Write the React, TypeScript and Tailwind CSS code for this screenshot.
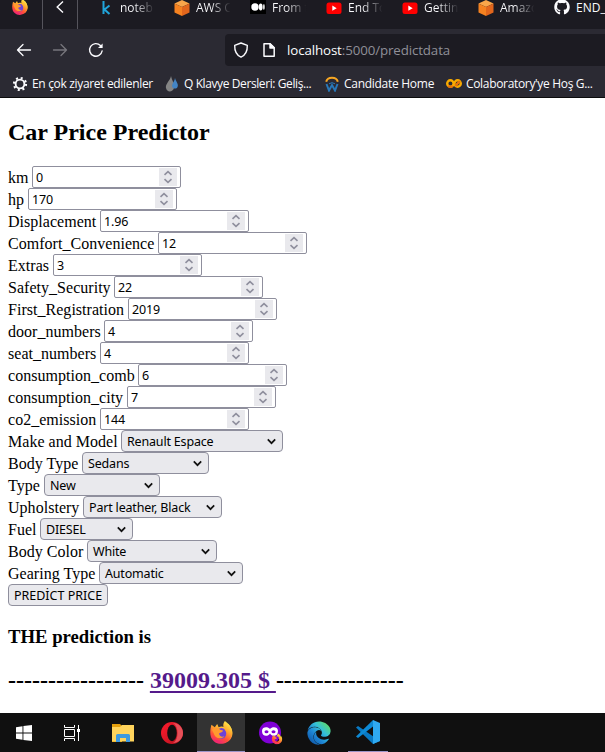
import type { ReactNode } from "react";
import { FaGithub, FaFirefoxBrowser, FaEdge } from "react-icons/fa";

function Gradients() {
  return (
    <svg className="absolute h-0 w-0">
      <defs>
        <linearGradient id="fox" x1="0.85" y1="0" x2="0.25" y2="1">
          <stop offset="0.05" stopColor="#fff04a" />
          <stop offset="0.4" stopColor="#ffa62e" />
          <stop offset="0.7" stopColor="#ff5038" />
          <stop offset="1" stopColor="#f0207a" />
        </linearGradient>
        <linearGradient id="edge" x1="0.9" y1="0.1" x2="0.1" y2="0.9">
          <stop offset="0" stopColor="#5ddc68" />
          <stop offset="0.35" stopColor="#35c1d8" />
          <stop offset="0.65" stopColor="#1e86d6" />
          <stop offset="1" stopColor="#0f58a8" />
        </linearGradient>
        <linearGradient id="opera" x1="0" y1="0" x2="1" y2="1">
          <stop offset="0" stopColor="#ff1b2d" />
          <stop offset="1" stopColor="#b5121f" />
        </linearGradient>
      </defs>
    </svg>
  );
}

function Fox({ size }: { size: number }) {
  return (
    <svg width={size} height={size} viewBox="0 0 24 24" className="shrink-0">
      <path d="M1.5 4 5 6.5 7.5 3 9 6.5C12 5 15 6 17 8L19 3C23 7 25 13 22 18C19 24 9 26 4 21C-1 17 0 9 1.5 4Z" fill="url(#fox)" />
      <circle cx="12" cy="13" r="5.6" fill="#6d43d8" />
      <path d="M15.5 0C22 4 25 11 22 17C19 23.5 9 25 4 19C9 21.5 17 19 17 13C17 9 11 6.500 15.500 0Z" fill="url(#fox)" />
      <path d="M2 9C4 6.500 8 6.500 10.500 9L13.500 10C13.500 12 11 12 9.500 13C9.500 15.500 12 17 15 16C12 20 5 18 4 13Z" fill="#ff9a2f" />
    </svg>
  );
}

function Cube() {
  return (
    <svg width="16" height="18" viewBox="0 0 16 18" className="shrink-0">
      <path d="M8 1 15.5 4.5 8 8 .5 4.5Z" fill="#f9a64a" />
      <path d="M.5 4.5 8 8V17L.5 13.5Z" fill="#f58220" />
      <path d="M15.5 4.5 8 8V17l7.5-3.5Z" fill="#e2661c" />
    </svg>
  );
}

function YouTube() {
  return (
    <svg width="16" height="16" viewBox="0 0 16 16" className="shrink-0">
      <rect x=".5" y="2.5" width="15" height="11.5" rx="2.5" fill="#f00" />
      <path d="M6.3 5.6 10.7 8.2 6.3 10.8Z" fill="#fff" />
    </svg>
  );
}

function Tab({ icon, label }: { icon: ReactNode; label: string }) {
  return (
    <div className="flex h-4 w-[76px] shrink-0 items-center">
      <div className="flex w-[22px] shrink-0 items-center">{icon}</div>
      <div className="w-12 whitespace-nowrap bg-linear-to-r from-[#fbfbfe] from-30% to-transparent to-72% bg-clip-text text-[12px] leading-4 text-transparent">
        {label}
      </div>
    </div>
  );
}

function Browser() {
  return (
    <header className="h-[98px] overflow-hidden border-b border-[#0c0c0d] bg-[#2b2a33] font-['Open_Sans','Noto_Sans',sans-serif] text-[#fbfbfe]">
      <div className="flex h-[29px] bg-[#1c1b22]">
        <div className="flex w-[43px] shrink-0 border-r border-[#55545c] pl-3">
          <div className="-mt-px"><Fox size={16} /></div>
        </div>
        <div className="flex w-[35px] shrink-0 justify-center border-r border-[#55545c]">
          <svg width="10" height="14" viewBox="0 0 10 14" fill="none" stroke="#fbfbfe" strokeWidth="1.4">
            <path d="M8 1.5 2.2 7 8 12.5" />
          </svg>
        </div>
        <div className="flex pl-5">
          <Tab
            icon={
              <svg width="16" height="16" viewBox="0 0 16 16" fill="none" stroke="#20a4da" strokeWidth="2">
                <path d="M5.500 1V14M11.500 5.500 6.500 9.500 11.500 14" />
              </svg>
            }
            label="noteb"
          />
          <Tab icon={<Cube />} label="AWS C" />
          <Tab
            icon={
              <svg width="16" height="16" viewBox="0 0 16 16">
                <path fill="#000" d="M0 0h16v14H0z" />
                <circle cx="5" cy="7" r="3.7" fill="#fff" />
                <ellipse cx="10.7" cy="7" rx="1.9" ry="3.4" fill="#fff" />
                <ellipse cx="13.9" cy="7" rx=".8" ry="3" fill="#fff" />
              </svg>
            }
            label="From f"
          />
          <Tab icon={<YouTube />} label="End To" />
          <Tab icon={<YouTube />} label="Gettin" />
          <Tab icon={<Cube />} label="Amazo" />
          <div className="flex h-4 items-center">
            <FaGithub size={16} className="-mt-0.5 shrink-0" />
            <span className="pl-1.5 text-[12px] leading-4">END_</span>
          </div>
        </div>
      </div>
      <div className="flex h-[41px] items-center pl-4">
        <div className="flex w-[209px] shrink-0 gap-5">
          <svg width="16" height="16" viewBox="0 0 16 16" fill="none" stroke="#fbfbfe" strokeWidth="1.3" strokeLinecap="round" strokeLinejoin="round">
            <path d="M14.5 8H1.5M7 2.5 1.5 8 7 13.5" />
          </svg>
          <svg width="16" height="16" viewBox="0 0 16 16" fill="none" stroke="#77767d" strokeWidth="1.3" strokeLinecap="round" strokeLinejoin="round">
            <path d="M1.5 8H14.5M9 2.5 14.5 8 9 13.5" />
          </svg>
          <svg width="16" height="16" viewBox="0 0 16 16" fill="none" stroke="#fbfbfe" strokeWidth="1.4" strokeLinecap="round">
            <path d="M14.1 9A6.3 6.3 0 1 1 12.4 3.5" />
            <path d="M14.6 1.5V6H10Z" fill="#fbfbfe" stroke="none" />
          </svg>
        </div>
        <div className="flex h-8 flex-1 items-center rounded-l-sm bg-[#1c1b22] pl-2">
          <svg width="16" height="16" viewBox="0 0 16 16" fill="none" stroke="#fbfbfe" strokeWidth="1.4" strokeLinejoin="round">
            <path d="M8 1 14.3 3.3C14.5 9 12.5 13.2 8 15.2C3.5 13.2 1.5 9 1.7 3.3Z" />
          </svg>
          <svg width="16" height="16" viewBox="0 0 16 16" fill="none" stroke="#fbfbfe" strokeWidth="1.5" strokeLinejoin="round" className="ml-3">
            <path d="M3 1.7H9L13.2 5.9V14.3H3Z" />
            <path d="M9 1.7V5.9H13.2Z" fill="#fbfbfe" />
          </svg>
          <div className="ml-[10px] pt-0.5 text-[13.33px] tracking-[-0.12px] text-[#8f8f98]">
            <span className="text-[#fbfbfe]">localhost</span>:5000/predictdata
          </div>
        </div>
      </div>
      <nav className="flex h-[27px] items-center whitespace-nowrap pl-3 text-[12px] tracking-[-0.33px]">
        <svg width="16" height="16" viewBox="0 0 16 16" fill="none" stroke="#fbfbfe" className="shrink-0">
          <circle cx="8" cy="8" r="4.4" strokeWidth="1.9" />
          <circle cx="8" cy="8" r="6" strokeWidth="2.2" strokeDasharray="2 2.712" />
        </svg>
        <span className="ml-1 w-[130px] shrink-0">En çok ziyaret edilenler</span>
        <svg width="16" height="16" viewBox="0 0 16 16" className="ml-0.5 shrink-0">
          <path d="M7 0C8 5 11 8 10 12C9 16 3 17 2 12C1 8 6 5 7 0Z" fill="#858585" />
          <path d="M11 2C12 6 15 8 13.5 11C12.5 13.5 8.5 13 8 10C8 7 11 5 11 2Z" fill="#4384c4" />
        </svg>
        <span className="ml-1 w-[129px] shrink-0 tracking-[-0.4px]">Q Klavye Dersleri: Geliş...</span>
        <svg width="16" height="16" viewBox="0 0 16 16" fill="none" className="ml-[11px] shrink-0">
          <path d="M2.200 5.800A5.900 5 0 0 1 13.800 5.800" stroke="#f6a623" strokeWidth="2" />
          <path d="M2.500 8 5 14.500 8 9 11 14.500 13.500 8" stroke="#2878b8" strokeWidth="2" />
          <path d="M5 7.800Q8 5.500 11 7.800" stroke="#2878b8" strokeWidth="1" />
        </svg>
        <span className="ml-1 w-[91px] shrink-0 tracking-[-0.28px]">Candidate Home</span>
        <svg width="16" height="16" viewBox="0 0 16 16" fill="none" strokeWidth="2.4" className="ml-[11px] shrink-0">
          <circle cx="4.400" cy="7.500" r="3.200" stroke="#f9ab00" />
          <circle cx="11.600" cy="7.500" r="3.200" stroke="#f9ab00" />
          <path d="M2.200 9.800A3.200 3.200 0 0 0 6.700 9.800M9.300 9.800 13.900 5.200" stroke="#e8710a" />
        </svg>
        <span className="ml-1">Colaboratory'ye Hoş G...</span>
      </nav>
    </header>
  );
}

const numbers = [
  { label: "km", width: "w-6", value: "0" },
  { label: "hp", width: "w-5", value: "170" },
  { label: "Displacement", width: "w-[92px]", value: "1.96" },
  { label: "Comfort_Convenience", width: "w-[150px]", value: "12" },
  { label: "Extras", width: "w-[45px]", value: "3" },
  { label: "Safety_Security", width: "w-[106px]", value: "22" },
  { label: "First_Registration", width: "w-[120px]", value: "2019" },
  { label: "door_numbers", width: "w-24", value: "4" },
  { label: "seat_numbers", width: "w-[92px]", value: "4" },
  { label: "consumption_comb", width: "w-[130px]", value: "6" },
  { label: "consumption_city", width: "w-[119px]", value: "7" },
  { label: "co2_emission", width: "w-[92px]", value: "144" },
];

const selects = [
  { label: "Make and Model", width: "w-[113px]", box: "w-[162px]", value: "Renault Espace" },
  { label: "Body Type", width: "w-[74px]", box: "w-[127px]", value: "Sedans" },
  { label: "Type", width: "w-9", box: "w-[116px]", value: "New" },
  { label: "Upholstery", width: "w-[75px]", box: "w-[139px]", value: "Part leather, Black" },
  { label: "Fuel", width: "w-8", box: "w-[93px]", value: "DIESEL" },
  { label: "Body Color", width: "w-[79px]", box: "w-[130px]", value: "White" },
  { label: "Gearing Type", width: "w-[91px]", box: "w-36", value: "Automatic" },
];

function Form() {
  return (
    <form className="mt-5">
      {numbers.map((n) => (
        <div key={n.label} className="flex h-[22px] whitespace-nowrap">
          <label className={`${n.width} shrink-0 leading-[23px] tracking-[0.03px]`}>{n.label}</label>
          <div className="flex h-[22px] w-[149px] items-center justify-between rounded-[2px] border border-[#8f8f9d] bg-white pl-[3px] pr-[3px] font-['Noto_Sans',sans-serif] text-[12.5px]">
            <span className="pt-0.5 tracking-[-0.15px]">{n.value}</span>
            <div className="flex h-[18px] w-[18px] items-center justify-center bg-[#e9e9ed]">
              <svg width="10" height="14" viewBox="0 0 10 14" fill="none" stroke="#8f8f9d" strokeWidth="1.6">
                <path d="M1.5 4.8 5 1.6 8.5 4.8M1.5 9.2 5 12.4 8.5 9.2" />
              </svg>
            </div>
          </div>
        </div>
      ))}
      {selects.map((s) => (
        <div key={s.label} className="flex h-[22px] whitespace-nowrap">
          <label className={`${s.width} shrink-0 leading-[23px] tracking-[0.03px]`}>{s.label}</label>
          <div className={`${s.box} flex h-[22px] items-center justify-between rounded-[4px] border border-[#8f8f9d] bg-[#e9e9ed] pl-[5px] pr-1.5 font-['Noto_Sans',sans-serif] text-[12.5px]`}>
            <span className="pt-0.5 tracking-[-0.18px]">{s.value}</span>
            <svg width="9" height="7" viewBox="0 0 9 7" fill="none" stroke="#111" strokeWidth="1.7">
              <path d="M.8 1.4 4.5 5.2 8.2 1.4" />
            </svg>
          </div>
        </div>
      ))}
      <button
        type="button"
        className="flex h-[22px] w-[100px] items-center justify-center whitespace-nowrap rounded-[4px] border border-[#8f8f9d] bg-[#e9e9ed] pt-0.5 font-['Noto_Sans',sans-serif] text-[12.5px]"
      >
        PREDİCT PRICE
      </button>
    </form>
  );
}

function Taskbar() {
  return (
    <footer className="flex h-[39px] items-stretch bg-[#101010]">
      <div className="flex w-12 items-center justify-center">
        <svg width="16" height="16" viewBox="0 0 16 16" fill="#fff">
          <path d="M0 2.2 6.5 1.3V7.5H0ZM7.4 1.1 16 0V7.5H7.4ZM0 8.4H6.5V14.7L0 13.8ZM7.4 8.4H16V16L7.4 14.9Z" />
        </svg>
      </div>
      <div className="flex w-12 items-center justify-center">
        <svg width="16" height="16" viewBox="0 0 16 16" fill="none" stroke="#fff">
          <path d="M.5 0V2.5H10.5V0M.5 16V13.5H10.5V16M.5 4.5H10.5V11.5H.5ZM14.5 0V16" />
          <path d="M13 4h3v3h-3z" fill="#fff" stroke="none" />
        </svg>
      </div>
      <div className="flex w-[53px] items-center justify-center">
        <svg width="22" height="18" viewBox="0 0 22 18">
          <path d="M0 0H8L10 2V18H0Z" fill="#e5a00d" />
          <path d="M0 3H8L10 1H22V17.5H0Z" fill="#ffd45c" />
          <path d="M4 18V11.5Q4 10 5.5 10H16.5Q18 10 18 11.5V18H14V14H8V18Z" fill="#3d9ae0" />
        </svg>
      </div>
      <div className="flex w-12 items-center justify-center pr-0.5">
        <svg width="22" height="22" viewBox="0 0 22 22" className="shrink-0">
          <circle cx="11" cy="11" r="11" fill="url(#opera)" />
          <path d="M12 1C17 1 22 5 22 11S17 21 12 21C18 18 18 4 12 1Z" fill="#e65058" />
          <ellipse cx="11" cy="11" rx="4.8" ry="8.3" fill="#101010" />
        </svg>
      </div>
      <div className="flex w-12 items-center justify-center border-b border-[#9b95c9] bg-[#333]">
        <Fox size={23} />
      </div>
      <div className="flex w-[50px] items-center justify-center pl-0.5">
        <svg width="24" height="24" viewBox="0 0 24 24">
          <circle cx="11" cy="11.5" r="11" fill="#8000d7" />
          <path d="M3 10C3 5.5 9 5.5 11 8C13 5.5 19 5.5 19 10C19 16 13 16 11 12.5C9 16 3 16 3 10Z" fill="#fff" />
          <ellipse cx="7.5" cy="10.7" rx="2" ry="1.5" fill="#8000d7" />
          <ellipse cx="14.5" cy="10.7" rx="2" ry="1.5" fill="#8000d7" />
          <g transform="translate(12.5 12.5)">
            <FaFirefoxBrowser size={11} fill="url(#fox)" />
          </g>
        </svg>
      </div>
      <div className="flex w-12 items-center justify-center">
        <FaEdge size={24} fill="url(#edge)" />
      </div>
      <div className="flex w-[49px] justify-center px-[4px]">
        <div className="flex w-10 items-center justify-center border-b border-[#9b95c9]">
          <svg width="24" height="24" viewBox="0 0 24 24">
            <path d="M0 7.5 2 6 24 21 17 24Z" fill="#0879c4" />
            <path d="M0 16.5 2 18 19 5 17 0Z" fill="#0d8ad6" />
            <path d="M17 0 24 3V21L17 24Z" fill="#2faaf2" />
          </svg>
        </div>
      </div>
    </footer>
  );
}

export default function App() {
  return (
    <div className="flex h-[752px] w-[605px] flex-col overflow-hidden bg-white font-['Liberation_Serif',serif] text-[16px] text-black">
      <Gradients />
      <Browser />
      <main className="flex-1 pl-2 pt-5">
        <h2 className="text-[24px] font-bold leading-7">Car Price Predictor</h2>
        <Form />
        <h3 className="mt-[19px] text-[18.72px] font-bold leading-[23px]">THE prediction is</h3>
        <h2 className="mt-[18px] whitespace-pre text-[24px] font-bold leading-7">
          {"----------------- "}
          <a className="text-[#551a8b] underline decoration-2 underline-offset-[3px] [text-decoration-skip-ink:none]">{"39009.305 $ "}</a>
          {"----------------"}
        </h2>
      </main>
      <Taskbar />
    </div>
  );
}
